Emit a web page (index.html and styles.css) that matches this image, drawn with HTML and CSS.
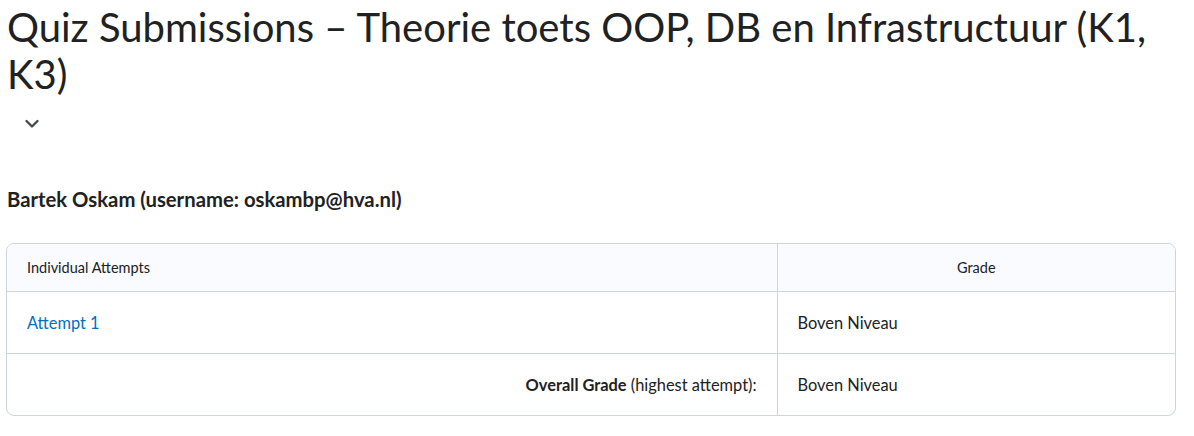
FILE: index.html
```html
<!DOCTYPE html>
<html lang="en">

<head>
    <meta charset="UTF-8" />
    <title>Quiz Submissions</title>
    <link rel="stylesheet" href="styles.css">
</head>

<body>
    <h1 class="page-title">Quiz Submissions – Theorie toets OOP, DB en Infrastructuur (K1, K3)</h1>
    <button class="title-menu" type="button" aria-label="Actions">
        <svg width="18" height="18" viewBox="0 0 18 18">
            <path d="M3.5 7 L9 12.5 L14.5 7" fill="none" stroke="#494c4e" stroke-width="2.4" stroke-linecap="round" stroke-linejoin="round" />
        </svg>
    </button>

    <h2 class="user-name">Bartek Oskam (username: oskambp@hva.nl)</h2>

    <div class="table-wrap">
        <table class="attempts">
            <thead>
                <tr>
                    <th class="col-attempt">Individual Attempts</th>
                    <th class="col-grade">Grade</th>
                </tr>
            </thead>
            <tbody>
                <tr>
                    <td><a href="#">Attempt 1</a></td>
                    <td>Boven Niveau</td>
                </tr>
                <tr>
                    <td class="overall"><strong>Overall Grade</strong> (highest attempt):</td>
                    <td>Boven Niveau</td>
                </tr>
            </tbody>
        </table>
    </div>
</body>

</html>
```

FILE: styles.css
```css
* {
    box-sizing: border-box;
}

body {
    font-family: Lato, 'Noto Sans', sans-serif;
    color: #202122;
    background: #fff;
    margin: 0;
    padding: 0 18px 0 6px;
}

.page-title {
    font-size: 40px;
    font-weight: 400;
    line-height: 47px;
    margin: 4px 0 0 1px;
}

.title-menu {
    display: block;
    background: none;
    border: none;
    padding: 0;
    margin: 16px 0 0 17px;
    width: 18px;
    height: 18px;
    cursor: pointer;
}

.user-name {
    font-size: 20.3px;
    font-weight: 700;
    margin: 55px 0 0 1px;
    line-height: 24px;
}

.table-wrap {
    margin-top: 32px;
    border: 1px solid #cdd5dc;
    border-radius: 8px;
    overflow: hidden;
}

.attempts {
    width: 100%;
    border-collapse: collapse;
    font-size: 16.4px;
}

.attempts th {
    background: #f9fbff;
    font-size: 14.5px;
    font-weight: 400;
    height: 47px;
    padding: 0 20px;
    border-bottom: 1px solid #cdd5dc;
}

.attempts .col-attempt {
    text-align: left;
    width: 770px;
    border-right: 1px solid #cdd5dc;
}

.attempts .col-grade {
    text-align: center;
}

.attempts td {
    height: 62px;
    padding: 0 20px;
    border-top: 1px solid #cdd5dc;
}

.attempts td:first-child {
    border-right: 1px solid #cdd5dc;
}

.attempts tbody tr:first-child td {
    border-top: none;
}

.attempts a {
    color: #006fbf;
    text-decoration: none;
}

.attempts .overall {
    text-align: right;
}
```
